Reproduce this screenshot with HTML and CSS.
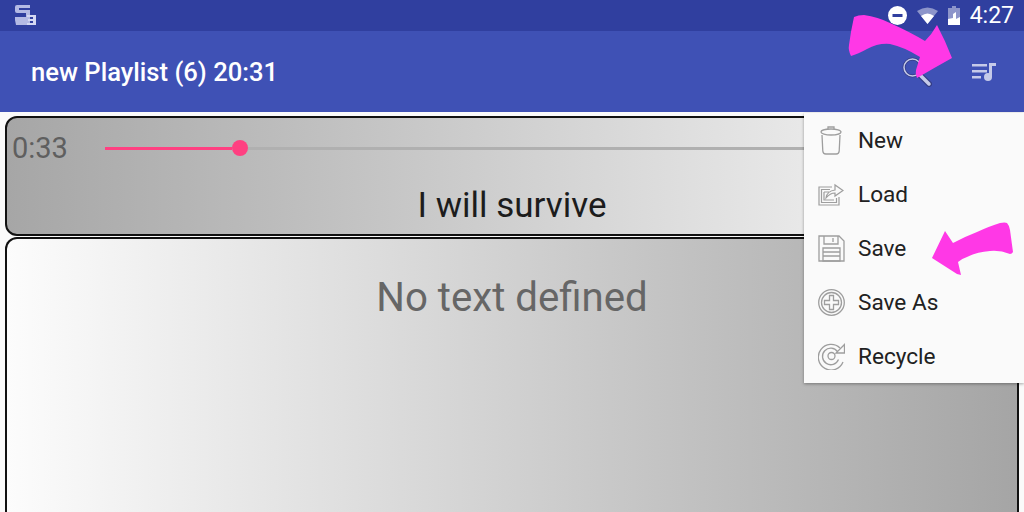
FILE: index.html
```html
<!DOCTYPE html>
<html lang="en">

<head>
  <meta charset="UTF-8">
  <meta name="viewport" content="width=device-width, initial-scale=1.0">
  <title>new Playlist</title>
  <link rel="stylesheet" href="styles.css">
</head>

<body>
  <div class="screen">
    <div class="status-bar">
      <svg class="app-logo" width="23" height="21" viewBox="0 0 23 21">
        <path d="M3 0h13v3H5v2h11v10H1v-3h11V8H3q-2 0-2-2V2q0-2 2-2z" fill="#b4bae4" />
        <path d="M1 15h15v5H2z" fill="#b4bae4" />
        <path d="M13 10h9v10h-9v-2h6v-2h-5v-2h5v-2h-6z" fill="#d4d8f2" />
      </svg>
      <div class="status-icons">
        <svg width="19" height="19" viewBox="0 0 19 19">
          <circle cx="9.500" cy="9.500" r="9.500" fill="#fff" />
          <rect x="4.500" y="8" width="10" height="3" fill="#303f9f" />
        </svg>
        <svg width="21" height="17" viewBox="0 0 21 17">
          <path d="M0 4Q10.500-3 21 4L10.500 17z" fill="#fff" opacity=".45" />
          <path d="M4 9Q10.500 4 17 9L10.500 17z" fill="#fff" />
        </svg>
        <svg width="12" height="19" viewBox="0 0 12 19">
          <path d="M4 0h4v2h4v17H0V2h4z" fill="#fff" opacity=".45" />
          <path d="M0 19v-6l5-1V8l3-2v7l4-2v8z" fill="#fff" />
        </svg>
        <span class="clock">4:27</span>
      </div>
    </div>

    <header class="app-bar">
      <h1>new Playlist (6) 20:31</h1>
      <div class="app-actions">
        <svg width="30" height="30" viewBox="0 0 30 30" fill="none">
          <circle cx="10.500" cy="10.500" r="8.500" stroke="#333c84" stroke-width="3" />
          <path d="M17 17l10 10" stroke="#333c84" stroke-width="6" stroke-linecap="round" />
          <circle cx="10.500" cy="10.500" r="8.500" stroke="#c5cae9" stroke-width="1.500" />
          <path d="M17 17l10 10" stroke="#c5cae9" stroke-width="3.500" stroke-linecap="round" />
        </svg>
        <svg width="24" height="18" viewBox="0 0 24 18" fill="#c5cae9">
          <path d="M0 1h15v2.500H0zM0 7h15v2.500H0zM0 13h9v2.500H0z" />
          <path d="M17 0h7v3h-4v11h-3z" />
          <circle cx="16" cy="14" r="4" />
        </svg>
      </div>
    </header>

    <main class="content">
      <section class="card player">
        <div class="seek-row">
          <span class="elapsed">0:33</span>
          <div class="seek-bar">
            <div class="seek-done"></div>
            <div class="seek-thumb"></div>
            <div class="seek-rest"></div>
          </div>
        </div>
        <p class="song-title">I will survive</p>
      </section>
      <section class="card lyrics">
        <p>No text defined</p>
      </section>
    </main>

    <nav class="menu">
      <div class="menu-item">
        <span class="menu-icon">
          <svg width="22" height="29" viewBox="0 0 22 29" fill="none" stroke="#9e9e9e" stroke-width="1.300">
            <ellipse cx="11" cy="6" rx="10" ry="3" />
            <path d="M8 3.300V1h6v2.300M2 9l.8 16q.2 3 3 3h10.400q2.800 0 3-3L20 9" />
          </svg>
        </span>
        <span>New</span>
      </div>
      <div class="menu-item">
        <span class="menu-icon">
          <svg width="26" height="23" viewBox="0 0 26 23" fill="none" stroke="#9e9e9e" stroke-width="1.200">
            <path d="M21 14v8H1V4h13" />
            <path d="M18.500 15v4.500h-15V6.500H12" />
            <path d="M6 9h5M16 17H6V9" />
            <path d="M8 15q1-7 9-8V2l8 5.500L17 13V10q-5 0-9 5z" />
          </svg>
        </span>
        <span>Load</span>
      </div>
      <div class="menu-item">
        <span class="menu-icon">
          <svg width="27" height="27" viewBox="0 0 27 27" fill="none" stroke="#9e9e9e" stroke-width="1.300">
            <path d="M1 1h20l5 5v20H1z" />
            <path d="M6 1v8h14V1M15 3v4" />
            <path d="M5 13h17v13H5zM5 17h17M5 21h17" />
          </svg>
        </span>
        <span>Save</span>
      </div>
      <div class="menu-item">
        <span class="menu-icon">
          <svg width="27" height="27" viewBox="0 0 27 27" fill="none" stroke="#9e9e9e" stroke-width="1.300">
            <circle cx="13.500" cy="13.500" r="12.800" />
            <circle cx="13.500" cy="13.500" r="10" />
            <path d="M11.500 6.500h4v5h5v4h-5v5h-4v-5h-5v-4h5z" />
          </svg>
        </span>
        <span>Save As</span>
      </div>
      <div class="menu-item">
        <span class="menu-icon">
          <svg width="27" height="28" viewBox="0 0 27 28" fill="none" stroke="#9e9e9e" stroke-width="1.300">
            <path d="M25 20a12.800 12.800 0 1 1-3-14" />
            <path d="M20.500 17.500a8.300 8.300 0 1 1-1-8" />
            <path d="M18 11h8.500V2.500z" />
            <circle cx="13.500" cy="14" r="3.500" />
          </svg>
        </span>
        <span>Recycle</span>
      </div>
    </nav>

    <!-- hand drawn arrows on top of the screenshot -->
    <svg class="arrow-top" width="106" height="66" viewBox="0 0 106 66">
      <path d="M6 3Q10 1 16 1Q30 3 42 9Q62 18 77 27Q84 20 89 11Q97 26 104 44Q86 54 69 64Q67 60 68 56L72 43Q56 33 42 30Q30 29 19 35Q10 40 3 42Q0 36 1 31Q3 16 6 3z" fill="#ff38e6" />
    </svg>
    <svg class="arrow-save" width="86" height="58" viewBox="0 0 86 58">
      <path d="M2 38L15 11L23 23Q34 17 47 12Q60 6 70 3Q75 2 77 3Q79 5 80 10L83 32Q82 34 80 34Q70 30 60 31Q46 32 37 37Q31 39 28 42L31 55L27 54z" fill="#ff38e6" />
    </svg>
  </div>
</body>

</html>
```

FILE: styles.css
```css
* {
  box-sizing: border-box;
}

body {
  margin: 0;
  font-family: Roboto, "Liberation Sans", sans-serif;
}

.screen {
  background: #fafafa;
  display: flex;
  flex-direction: column;
  height: 512px;
  overflow: hidden;
  position: relative;
  width: 1024px;
}

.status-bar {
  align-items: center;
  background: #303f9f;
  display: flex;
  flex: none;
  height: 31px;
  justify-content: space-between;
  padding: 0 10px 0 14px;
}

.status-icons {
  align-items: center;
  color: #fff;
  display: flex;
  gap: 10px;
}

.clock {
  font-size: 23px;
}

.app-bar {
  align-items: center;
  background: #3f51b5;
  display: flex;
  flex: none;
  height: 81px;
  justify-content: space-between;
  padding: 0 28px 0 31px;
}

.app-bar h1 {
  color: #fff;
  font-size: 25.600px;
  font-weight: 500;
  margin: 0;
}

.app-actions {
  align-items: center;
  display: flex;
  gap: 40px;
}

.content {
  display: flex;
  flex: 1;
  flex-direction: column;
  gap: 1px;
  min-height: 0;
  padding: 4px 5px 0;
}

.card {
  border: 2px solid #111;
  border-radius: 12px;
}

.player {
  background: linear-gradient(90deg, #a6a6a6, #fafafa);
  flex: none;
  height: 120px;
}

.seek-row {
  align-items: center;
  display: flex;
  height: 60px;
  padding-left: 5px;
}

.elapsed {
  color: #5f5f5f;
  font-size: 29px;
  width: 93px;
}

.seek-bar {
  align-items: center;
  display: flex;
  flex: 1;
}

.seek-done {
  background: #ff4081;
  height: 3px;
  width: 127px;
}

.seek-thumb {
  background: #ff4081;
  border-radius: 50%;
  flex: none;
  height: 16px;
  width: 16px;
}

.seek-rest {
  background: #b0b0b0;
  flex: 1;
  height: 3px;
}

.song-title {
  color: #1c1c1c;
  font-size: 35px;
  margin: 7px 0 0;
  text-align: center;
}

.lyrics {
  background: linear-gradient(90deg, #fcfcfc, #a5a5a5);
  border-bottom: none;
  border-radius: 12px 12px 0 0;
  flex: 1;
}

.lyrics p {
  color: #666;
  font-size: 40.200px;
  margin: 35px 0 0;
  text-align: center;
}

.menu {
  background: #fafafa;
  box-shadow: 0 1px 3px rgba(0, 0, 0, .35);
  display: flex;
  flex-direction: column;
  height: 270px;
  position: absolute;
  right: 0;
  top: 113px;
  width: 220px;
}

.menu-item {
  align-items: center;
  color: #212121;
  display: flex;
  flex: 1;
  font-size: 22.600px;
  gap: 13px;
  padding-left: 13px;
}

.menu-icon {
  display: flex;
  flex: none;
  justify-content: center;
  width: 28px;
}

.arrow-top {
  left: 848px;
  position: absolute;
  top: 14px;
}

.arrow-save {
  left: 930px;
  position: absolute;
  top: 220px;
}
```
